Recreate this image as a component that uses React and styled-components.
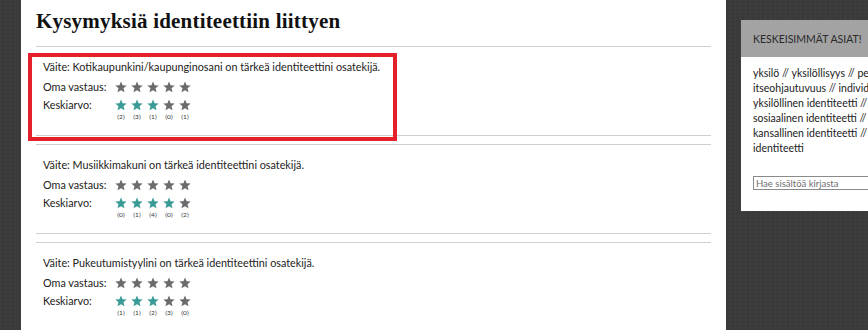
import React from 'react'
import styled, { createGlobalStyle } from 'styled-components'

const GlobalStyle = createGlobalStyle`
    html, body {
        margin: 0;
        padding: 0;
        height: 100%;
        overflow: hidden;
    }
    body {
        background-color: #3b3b3b;
        background-image:
            repeating-linear-gradient(90deg, rgba(255,255,255,0.025) 0 1px, transparent 1px 5px),
            repeating-linear-gradient(0deg, rgba(0,0,0,0.06) 0 1px, transparent 1px 4px);
        font-family: Lato, "Open Sans", sans-serif;
    }
`

const Page = styled.div`
    display: flex;
    align-items: flex-start;
    height: 330px;
    padding-left: 21px;
`

const Main = styled.main`
    width: 690px;
    height: 100%;
    background: #fff;
    padding-left: 15px;
    flex-shrink: 0;
`

const Title = styled.h1`
    font-family: "Liberation Serif", serif;
    font-weight: bold;
    font-size: 21px;
    color: #111;
    margin: 0;
    padding-top: 9px;
    height: 46px;
    box-sizing: border-box;
    letter-spacing: 0.2px;
`

const Question = styled.section`
    position: relative;
    width: 675px;
    border-top: 1px solid #cfcfcf;
    border-bottom: 1px solid #cfcfcf;
    height: 90px;
    padding: 11px 0 0 7px;
    box-sizing: border-box;
    margin-bottom: 8px;
    font-size: 10.8px;
    color: #222;
`

const Highlight = styled.div`
    position: absolute;
    left: -8px;
    top: 6px;
    width: 369px;
    height: 88px;
    border: 4px solid #e4202b;
    box-sizing: border-box;
    pointer-events: none;
`

const Statement = styled.div`
    line-height: 18px;
    height: 20px;
`

const Row = styled.div`
    display: flex;
    align-items: flex-start;
    line-height: 18px;
`

const Label = styled.span`
    width: 72px;
    flex-shrink: 0;
`

const Stars = styled.div`
    display: flex;
    gap: 4px;
`

const StarCell = styled.div`
    width: 12px;
    display: flex;
    flex-direction: column;
    align-items: center;
    padding-top: 3px;
`

const Count = styled.span`
    font-size: 6.5px;
    line-height: 8px;
    color: #333;
    white-space: nowrap;
    margin-top: 2px;
`

const Sidebar = styled.aside`
    margin-left: 15px;
    margin-top: 20px;
    width: 220px;
    flex-shrink: 0;
    background: #fff;
`

const SidebarHeader = styled.div`
    background: #a3a3a3;
    height: 37px;
    padding-left: 12px;
    display: flex;
    align-items: center;
    font-size: 10.5px;
    color: #2a2a2a;
    text-transform: uppercase;
`

const SidebarBody = styled.div`
    padding: 9px 12px 21px;
    font-size: 10.5px;
    line-height: 15px;
    color: #1a1a1a;
    white-space: nowrap;
`

const SearchInput = styled.input`
    display: block;
    margin-top: 20px;
    width: 180px;
    height: 14px;
    box-sizing: border-box;
    border: 1px solid #8a8a8a;
    padding: 0 2px;
    font-family: inherit;
    font-size: 9.5px;
    &::placeholder { color: #6f6f6f; }
`

const Star = ({ filled }) => (
    <svg width="12" height="12" viewBox="0 0 24 24">
        <polygon
            points="12,1 15.1,8.6 23.4,9.2 17,14.6 19.1,22.7 12,18.3 4.9,22.7 7,14.6 0.6,9.2 8.9,8.6"
            fill={filled ? '#3a9a95' : '#6b6b6b'}
        />
    </svg>
)

const questions = [
    { text: 'Kotikaupunkini/kaupunginosani on tärkeä identiteettini osatekijä.', avg: 3, counts: [2, 3, 1, 0, 1] },
    { text: 'Musiikkimakuni on tärkeä identiteettini osatekijä.', avg: 4, counts: [0, 1, 4, 0, 2] },
    { text: 'Pukeutumistyylini on tärkeä identiteettini osatekijä.', avg: 3, counts: [1, 1, 2, 3, 0] },
]

const keywords = [
    'yksilö // yksilöllisyys // persoonallisuus //',
    'itseohjautuvuus // individualismi //',
    'yksilöllinen identiteetti // minäkuva //',
    'sosiaalinen identiteetti // ryhmä //',
    'kansallinen identiteetti // kulttuurinen',
    'identiteetti',
]

const App = () => (
    <Page>
        <GlobalStyle />
        <Main>
            <Title>Kysymyksiä identiteettiin liittyen</Title>
            {questions.map((q, i) => (
                <Question key={i}>
                    {i === 0 && <Highlight />}
                    <Statement>Väite: {q.text}</Statement>
                    <Row>
                        <Label>Oma vastaus:</Label>
                        <Stars>
                            {[0, 1, 2, 3, 4].map(n => (
                                <StarCell key={n}><Star /></StarCell>
                            ))}
                        </Stars>
                    </Row>
                    <Row>
                        <Label>Keskiarvo:</Label>
                        <Stars>
                            {q.counts.map((c, n) => (
                                <StarCell key={n}>
                                    <Star filled={n < q.avg} />
                                    <Count>({c})</Count>
                                </StarCell>
                            ))}
                        </Stars>
                    </Row>
                </Question>
            ))}
        </Main>
        <Sidebar>
            <SidebarHeader>Keskeisimmät asiat!</SidebarHeader>
            <SidebarBody>
                {keywords.map(k => <div key={k}>{k}</div>)}
                <SearchInput placeholder="Hae sisältöä kirjasta" />
            </SidebarBody>
        </Sidebar>
    </Page>
)

export default App
